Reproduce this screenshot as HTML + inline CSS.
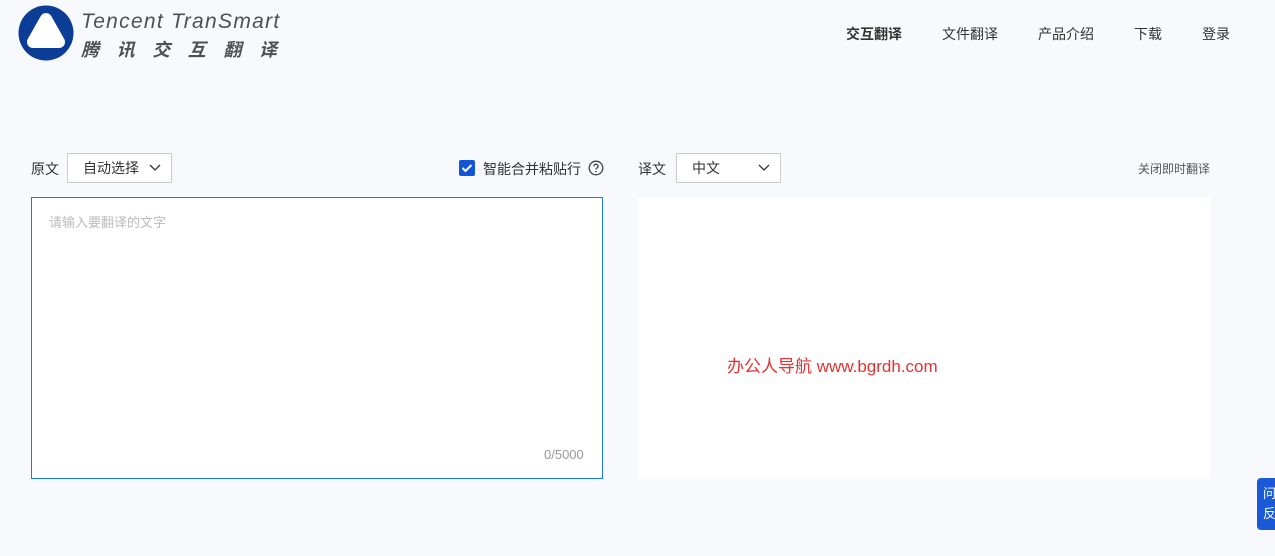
<!DOCTYPE html>
<html><head><meta charset="utf-8"><style>
*{margin:0;padding:0;box-sizing:border-box}
body{width:1275px;height:556px;background:#f8f9fd;font-family:"Liberation Sans","Noto Sans CJK SC",sans-serif;position:relative;overflow:hidden;color:#333}
.abs{position:absolute}
.nav span{position:absolute;top:24px;font-size:14px;color:#333}
.sel{position:absolute;height:30px;border:1px solid #ccc;background:#fff;font-size:14px;line-height:28px;padding-left:15px;color:#333}
.sel svg{position:absolute;right:10px;top:10px}
</style></head><body>
<svg class="abs" style="left:18px;top:5px" width="56" height="56" viewBox="0 0 56 56">
<circle cx="28" cy="28" r="27.5" fill="#0c3d96"/>
<path d="M28 14 L41 37 L15 37 Z" fill="#fff" stroke="#fff" stroke-width="12" stroke-linejoin="round"/>
</svg>
<div class="abs" style="left:81px;top:10px;font-size:21px;font-style:italic;color:#4f4f55;letter-spacing:1.3px">Tencent TranSmart</div>
<div class="abs" style="left:81px;top:36px;font-size:18px;font-style:italic;font-weight:bold;color:#4f4f55;letter-spacing:17.6px">腾讯交互翻<span style="letter-spacing:0">译</span></div>
<div class="nav">
<span style="left:846px;font-weight:bold">交互翻译</span>
<span style="left:942px">文件翻译</span>
<span style="left:1038px">产品介绍</span>
<span style="left:1134px">下载</span>
<span style="left:1202px">登录</span>
</div>
<div class="abs" style="left:31px;top:159px;font-size:14px">原文</div>
<div class="sel" style="left:67px;top:153px;width:105px">自动选择<svg width="12" height="8" viewBox="0 0 12 8"><path d="M1 1l5 5 5-5" stroke="#333" stroke-width="1.3" fill="none"/></svg></div>
<div class="abs" style="left:459px;top:160px;width:16px;height:16px;background:#1155d8;border-radius:2px"><svg width="16" height="16"><path d="M3.5 8l3 3 6-6" stroke="#fff" stroke-width="2" fill="none"/></svg></div>
<div class="abs" style="left:483px;top:159px;font-size:14px">智能合并粘贴行</div>
<svg class="abs" style="left:588px;top:160px" width="16" height="16" viewBox="0 0 16 16"><circle cx="8" cy="8" r="6.8" stroke="#444" stroke-width="1.3" fill="none"/><path d="M6 6.3a2 2 0 1 1 2.8 1.8c-.6.3-.8.7-.8 1.4" stroke="#444" stroke-width="1.3" fill="none"/><circle cx="8" cy="11.6" r=".8" fill="#444"/></svg>
<div class="abs" style="left:638px;top:159px;font-size:14px">译文</div>
<div class="sel" style="left:676px;top:153px;width:105px">中文<svg width="12" height="8" viewBox="0 0 12 8"><path d="M1 1l5 5 5-5" stroke="#333" stroke-width="1.3" fill="none"/></svg></div>
<div class="abs" style="left:1138px;top:160px;font-size:12px;color:#555">关闭即时翻译</div>
<div class="abs" style="left:31px;top:197px;width:572px;height:282px;background:#fff;border:1px solid #1677ff"></div>
<div class="abs" style="left:49px;top:212px;font-size:13px;color:#bbb">请输入要翻译的文字</div>
<div class="abs" style="left:544px;top:447px;font-size:13px;color:#999">0/5000</div>
<div class="abs" style="left:638px;top:197px;width:573px;height:282px;background:#fff"></div>
<div class="abs" style="left:727px;top:352px;font-size:17px;color:#e83030">办公人导航 www.bgrdh.com</div>
<div class="abs" style="left:1257px;top:478px;width:30px;height:52px;background:#1a5ad8;border-radius:4px;color:#fff;font-size:13px;line-height:20px;padding:6px 0 0 6px">问<br>反</div>
</body></html>
